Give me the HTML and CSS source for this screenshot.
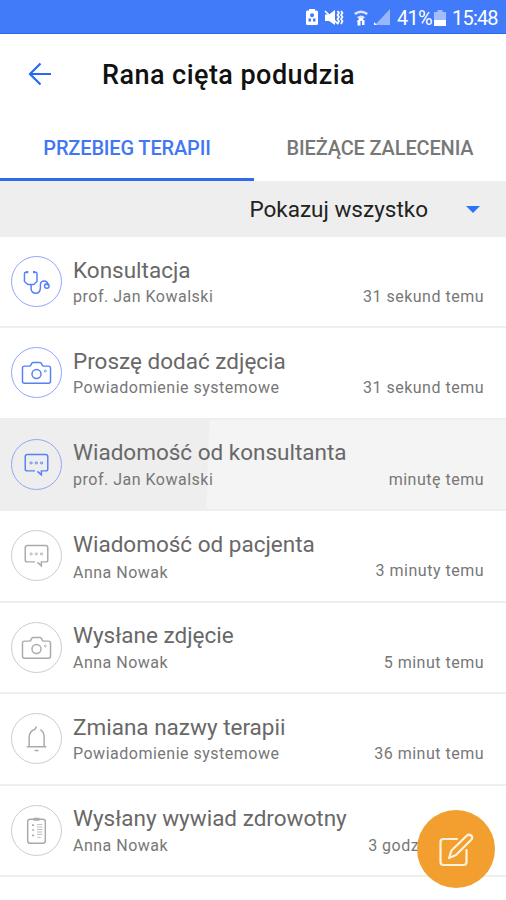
FILE: index.html
```html
<!DOCTYPE html>
<html lang="pl">
<head>
<meta charset="utf-8">
<title>Rana cięta podudzia</title>
<link rel="stylesheet" href="styles.css">
</head>
<body>
<svg class="defs" width="0" height="0" aria-hidden="true">
  <symbol id="steth" viewBox="0 0 50 50"><path d="M15.500 15.500H14q-1.300 0-1.300 1.500V25l3.500 3h6l3.300-3V17q0-1.500-1.300-1.500H22.500M19.500 28v4.500q.5 4.500 4.800 4.500t4.700-5.500v-3q0-4 4-4 3 0 3.500 3l-1 1.500"/><circle cx="35.500" cy="29.500" r="2.300"/><path d="M15.500 14.300v2.200M22.500 14.300v2.200" stroke-width="2.200"/></symbol>
  <symbol id="camera" viewBox="0 0 50 50"><path d="M13 18.500h4.500q1.500 0 2-1.500l.8-1.500q.4-.8 1.500-.8h6.500q1 0 1.500.8l.8 1.500q.5 1.500 2 1.500h4.500q2.200 0 2.200 2v13.500q0 2-2 2H12.700q-2 0-2-2V20.500q0-2 2.300-2z"/><circle cx="25" cy="26.500" r="4.600"/><circle class="dot" cx="34" cy="23.500" r="1"/></symbol>
  <symbol id="message" viewBox="0 0 50 50"><path d="M23.500 31.500H15.500q-2 0-2-2V17q0-2.200 2.200-2.200h18.600q2.200 0 2.200 2.200v12.500q0 2-2 2h-4.500v4l-4-3.500"/><path class="dot" d="M18.500 22.500h2v1.800h-2zM23.800 22.500h2v1.800h-2zM29.200 22.500h2v1.800h-2z"/></symbol>
  <symbol id="bell" viewBox="0 0 50 50"><path d="M15 33.500h20M17.500 33V23.500q.2-6 6-8l1.500-2.500M29 16q3.800 2.500 3.800 7.500v9.500M23 37.300h4"/></symbol>
  <symbol id="clipboard" viewBox="0 0 50 50"><rect x="16" y="13.500" width="18" height="24.500" rx="2.500"/><path d="M22 12.700h6M22 14.300h6"/><path d="M20.500 19.500h2M20.500 24.500h2M20.500 30h2" stroke-width="1.600"/><path d="M25.500 19h5.500M25.500 21.500h5.500M25.500 24h5.500M25.500 26.500h5.500M25.500 29h5.500M26 32h3.500" stroke-width=".8"/></symbol>
</svg>
<div class="status">
  <svg class="status-icons" width="86" height="20" viewBox="0 0 86 20" fill="#fff">
    <path fill-rule="evenodd" d="M3 2.500h2V1h6v1.500h1.500q1.500 0 1.500 1.500v11.500q0 1.500-1.500 1.500H3.500Q2 17 2 15.500V4q0-1.500 1-1.500zM8 5.200a2 2 0 1 0 .1 0zM4.500 10.500v3H7v-3zM9 10.500v3h2.500v-3z"/>
    <path d="M21 6.500h4L31 2v15l-6-4h-4z"/><path d="M21 3l13 13M33.500 3l1.500 2-1.500 2 1.500 2-1.500 2 1.500 2-1.500 3M37 3l1.500 2-1.500 2 1.500 2-1.500 2 1.500 2-1.500 3" fill="none" stroke="#fff" stroke-width="1.700"/>
    <path d="M50 5q7-5 14 0l-1.500 2q-5.500-4-11 0zM53 9q4-3 8 0l-1.500 1.800q-2.500-1.800-5 0z" opacity=".8"/><path d="M55 10h4v3h-4zM52.500 13.500l2-2 2 2v4h-3v-4zM58 12h2.500v5H58z"/>
    <path d="M86 1v16H71z" opacity=".45"/><path d="M70 17v-3l3 3z"/>
  </svg>
  <span class="percent">41%</span>
  <svg width="12" height="18" viewBox="0 0 12 18" fill="#fff"><path opacity=".5" d="M0 3h3.500V1h5v2H12v8H0z"/><path d="M0 11h12v6H0z"/></svg>
  <span class="clock">15:48</span>
</div>
<header class="bar">
  <svg class="back" width="24" height="24" viewBox="0 0 24 24"><path d="M23 12H2M12.500 1.500L2 12l10.500 10.500" fill="none" stroke="#2769f5" stroke-width="2.200"/></svg>
  <h1>Rana cięta podudzia</h1>
</header>
<nav class="tabs">
  <div class="tab active"><span>PRZEBIEG TERAPII</span></div>
  <div class="tab"><span>BIEŻĄCE ZALECENIA</span></div>
</nav>
<div class="filter"><span>Pokazuj wszystko</span><i class="caret"></i></div>
<main class="list">
  <article class="row blue"><svg class="icon"><use href="#steth"/></svg><div class="body"><h2>Konsultacja</h2><div class="meta"><span class="who">prof. Jan Kowalski</span><time>31 sekund temu</time></div></div></article>
  <article class="row blue"><svg class="icon"><use href="#camera"/></svg><div class="body"><h2>Proszę dodać zdjęcia</h2><div class="meta"><span class="who">Powiadomienie systemowe</span><time>31 sekund temu</time></div></div></article>
  <article class="row blue pressed"><svg class="icon"><use href="#message"/></svg><div class="body"><h2>Wiadomość od konsultanta</h2><div class="meta"><span class="who">prof. Jan Kowalski</span><time>minutę temu</time></div></div></article>
  <article class="row"><svg class="icon"><use href="#message"/></svg><div class="body"><h2>Wiadomość od pacjenta</h2><div class="meta low"><span class="who">Anna Nowak</span><time>3 minuty temu</time></div></div></article>
  <article class="row"><svg class="icon"><use href="#camera"/></svg><div class="body"><h2>Wysłane zdjęcie</h2><div class="meta"><span class="who">Anna Nowak</span><time>5 minut temu</time></div></div></article>
  <article class="row"><svg class="icon"><use href="#bell"/></svg><div class="body"><h2>Zmiana nazwy terapii</h2><div class="meta"><span class="who">Powiadomienie systemowe</span><time>36 minut temu</time></div></div></article>
  <article class="row"><svg class="icon"><use href="#clipboard"/></svg><div class="body"><h2>Wysłany wywiad zdrowotny</h2><div class="meta"><span class="who">Anna Nowak</span><time>3 godziny temu</time></div></div></article>
</main>
<button class="fab" aria-label="Edytuj"><svg width="36" height="36" viewBox="0 0 36 36" fill="none" stroke="#fff3dc" stroke-width="2.200" stroke-linejoin="round" stroke-linecap="round"><path d="M19 7H5.500Q2.500 7 2.500 10v20Q2.500 33 5.500 33h20q3 0 3-3V18"/><path d="M11 26l2.500-7.500L29 3.500q2-1.500 4 0t.5 4L18 23z"/></svg></button>
</body>
</html>
```
FILE: styles.css
```css
* { box-sizing: border-box; }
body { margin: 0; width: 506px; height: 900px; overflow: hidden; position: relative; background: #fff; color: #666; font-family: Roboto, sans-serif; }
.defs { display: block; height: 0; }
.status { height: 34px; background: #427bfa; border-bottom: 1px solid #2468ed; display: flex; align-items: center; justify-content: flex-end; padding: 2px 8px 0 0; color: #fff; font-size: 20px; }
.status-icons { margin-right: 7px; }
.percent { width: 35px; margin-right: 2px; letter-spacing: -.8px; }
.clock { margin-left: 6px; width: 46px; letter-spacing: -.8px; }
.bar { height: 80px; display: flex; align-items: center; padding-left: 28px; }
.back { display: block; }
h1 { margin: 2px 0 0 50px; font-size: 27px; font-weight: 500; line-height: 32px; color: #111; letter-spacing: .45px; white-space: nowrap; }
.tabs { height: 67px; display: flex; }
.tab { width: 252px; flex: none; padding-top: 3px; display: flex; align-items: center; justify-content: center; font-size: 20px; font-weight: 500; letter-spacing: -.15px; color: #777; white-space: nowrap; border-bottom: 3px solid transparent; }
.tab.active { width: 254px; color: #4277f3; border-color: #2e6cec; }
.filter { height: 56px; background: #eee; display: flex; align-items: center; justify-content: flex-end; padding-right: 26px; color: #222; font-size: 22.500px; }
.caret { margin-left: 38px; border: 7px solid transparent; border-top-color: #2875f5; border-bottom: 0; }
.row { height: 91.430px; display: flex; border-bottom: 2px solid #eee; padding: 19px 22px 0 11px; }
.icon { width: 51px; height: 51px; flex: none; border: 1.500px solid #ccc; border-radius: 50%; fill: none; stroke: #aaa; stroke-width: 1.500; }
.blue .icon { border-color: #91a6fb; stroke: #5680f5; }
.dot { stroke-width: .8; }
.pressed { background: linear-gradient(92deg, #eee 0 41%, #f4f4f4 41.300%); }
.body { flex: 1; margin-left: 11px; min-width: 0; }
h2 { margin: .5px 0 0; font-size: 22.500px; line-height: 27px; font-weight: 400; color: #686868; white-space: nowrap; }
.meta { display: flex; justify-content: space-between; font-size: 16px; line-height: 20px; margin-top: 3.500px; color: #777; white-space: nowrap; letter-spacing: .5px; }
.low .who { padding-top: 2px; }
.fab { position: absolute; left: 417px; top: 810px; width: 78px; height: 78px; border: 0; padding: 2px 0 0; border-radius: 50%; background: #f29f30; display: flex; align-items: center; justify-content: center; }
```
